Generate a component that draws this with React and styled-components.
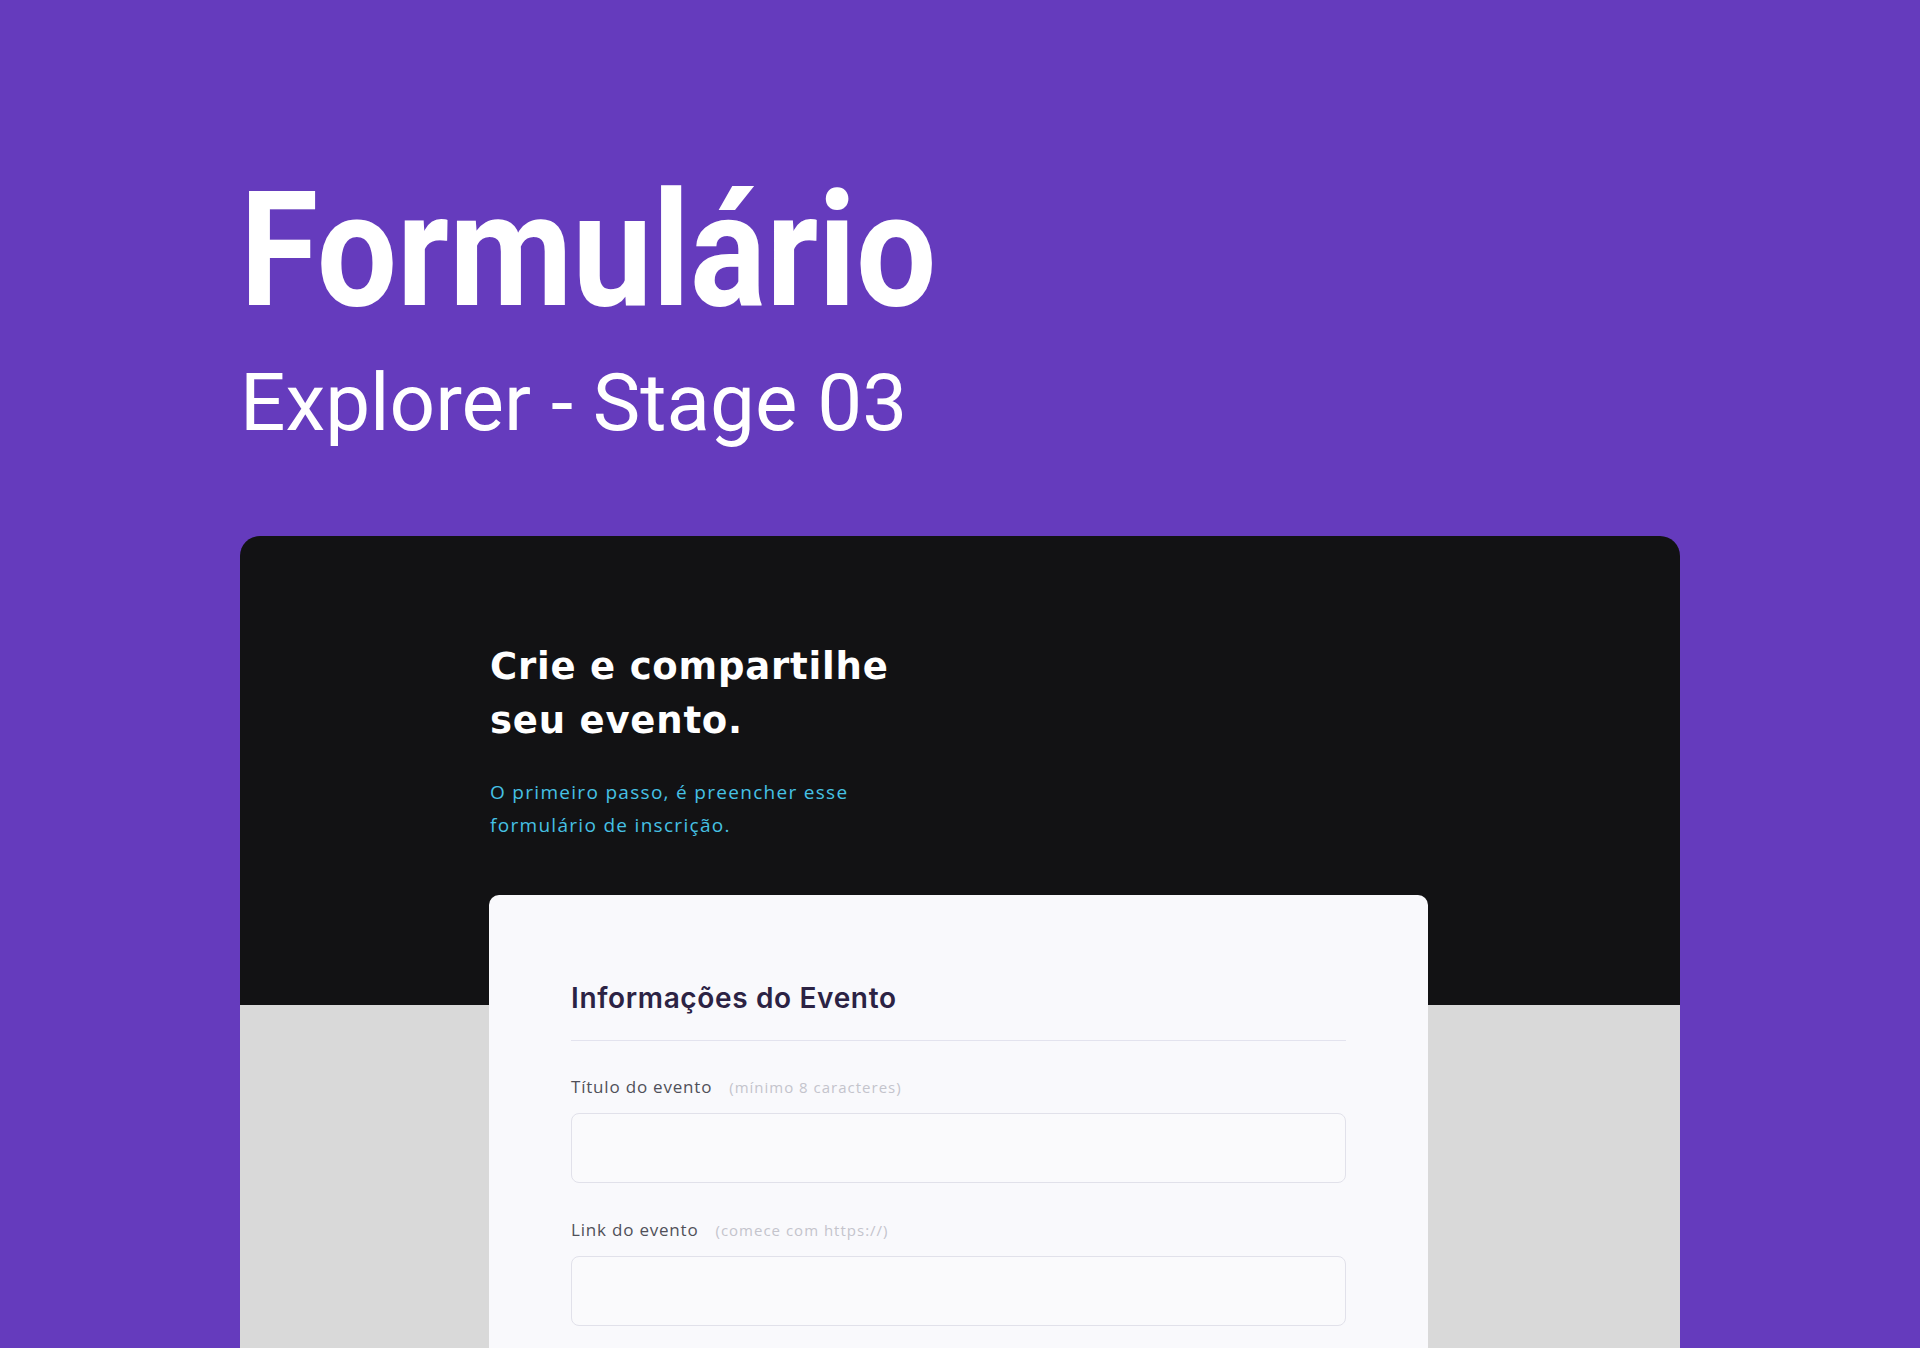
import React from 'react'
import styled, { createGlobalStyle } from 'styled-components'

const GlobalStyle = createGlobalStyle`
  * { box-sizing: border-box; }
  html, body { margin: 0; padding: 0; background: #653bbd; }
  body { font-family: "Open Sans", sans-serif; }
`

const Page = styled.div`
  height: 1348px;
  overflow: hidden;
  background: #653bbd;
  padding: 171px 240px 0;
`

const Header = styled.header`
  display: flex;
  flex-direction: column;
  gap: 32px;
  margin-bottom: 93px;
`

const Title = styled.h1`
  margin: 0;
  font-family: Roboto, sans-serif;
  font-weight: 700;
  font-size: 160px;
  line-height: 160px;
  color: #fff;
  transform: scaleX(0.89);
  transform-origin: left center;
`

const Stage = styled.p`
  margin: 0;
  font-family: Roboto, sans-serif;
  font-weight: 400;
  font-size: 80px;
  line-height: 80px;
  color: #fff;
`

const Card = styled.section`
  border-radius: 20px 20px 0 0;
  background: linear-gradient(to bottom, #121214 0, #121214 469px, #d9d9d9 469px);
  padding-top: 104px;
  height: 900px;
`

const Container = styled.div`
  width: 938px;
  margin-left: 250px;
`

const Headline = styled.h2`
  margin: 0;
  max-width: 450px;
  font-family: "DejaVu Sans", sans-serif;
  font-weight: 700;
  font-size: 37px;
  line-height: 54px;
  letter-spacing: 0.8px;
  color: #fff;
`

const Lead = styled.p`
  margin: 28px 0 0;
  max-width: 400px;
  font-size: 19px;
  line-height: 33px;
  letter-spacing: 1.3px;
  color: #46c1e4;
`

const FormCard = styled.div`
  margin-top: 53px;
  margin-left: -1px;
  background: #f9f9fc;
  border-radius: 10px 10px 0 0;
  padding: 86px 82px 200px;
`

const SectionTitle = styled.h3`
  margin: 0 0 34px;
  padding-bottom: 25px;
  border-bottom: 1px solid #e3e3ee;
  font-family: Inter, sans-serif;
  font-weight: 600;
  font-size: 28px;
  line-height: 34px;
  letter-spacing: 0.65px;
  color: #2c2344;
`

const Field = styled.div`
  display: flex;
  flex-direction: column;
  gap: 14px;
  margin-bottom: 35px;
`

const LabelRow = styled.label`
  display: flex;
  align-items: baseline;
  gap: 17px;
  line-height: 24px;
`

const LabelText = styled.span`
  font-size: 17px;
  letter-spacing: 0.8px;
  color: #505059;
`

const Hint = styled.span`
  font-size: 15px;
  letter-spacing: 1px;
  color: #c4c4cc;
`

const Input = styled.input`
  height: 70px;
  width: 100%;
  border: 1px solid #e1e1ea;
  border-radius: 8px;
  background: #fafafc;
  padding: 0 20px;
  font-size: 16px;
  outline: none;
`

const fields = [
  { label: 'Título do evento', hint: '(mínimo 8 caracteres)' },
  { label: 'Link do evento', hint: '(comece com https://)' },
]

export default function App() {
  return (
    <Page>
      <GlobalStyle />
      <Header>
        <Title>Formulário</Title>
        <Stage>Explorer - Stage 03</Stage>
      </Header>
      <Card>
        <Container>
          <Headline>Crie e compartilhe seu evento.</Headline>
          <Lead>O primeiro passo, é preencher esse formulário de inscrição.</Lead>
          <FormCard>
            <SectionTitle>Informações do Evento</SectionTitle>
            {fields.map((f) => (
              <Field key={f.label}>
                <LabelRow>
                  <LabelText>{f.label}</LabelText>
                  <Hint>{f.hint}</Hint>
                </LabelRow>
                <Input type="text" />
              </Field>
            ))}
          </FormCard>
        </Container>
      </Card>
    </Page>
  )
}
